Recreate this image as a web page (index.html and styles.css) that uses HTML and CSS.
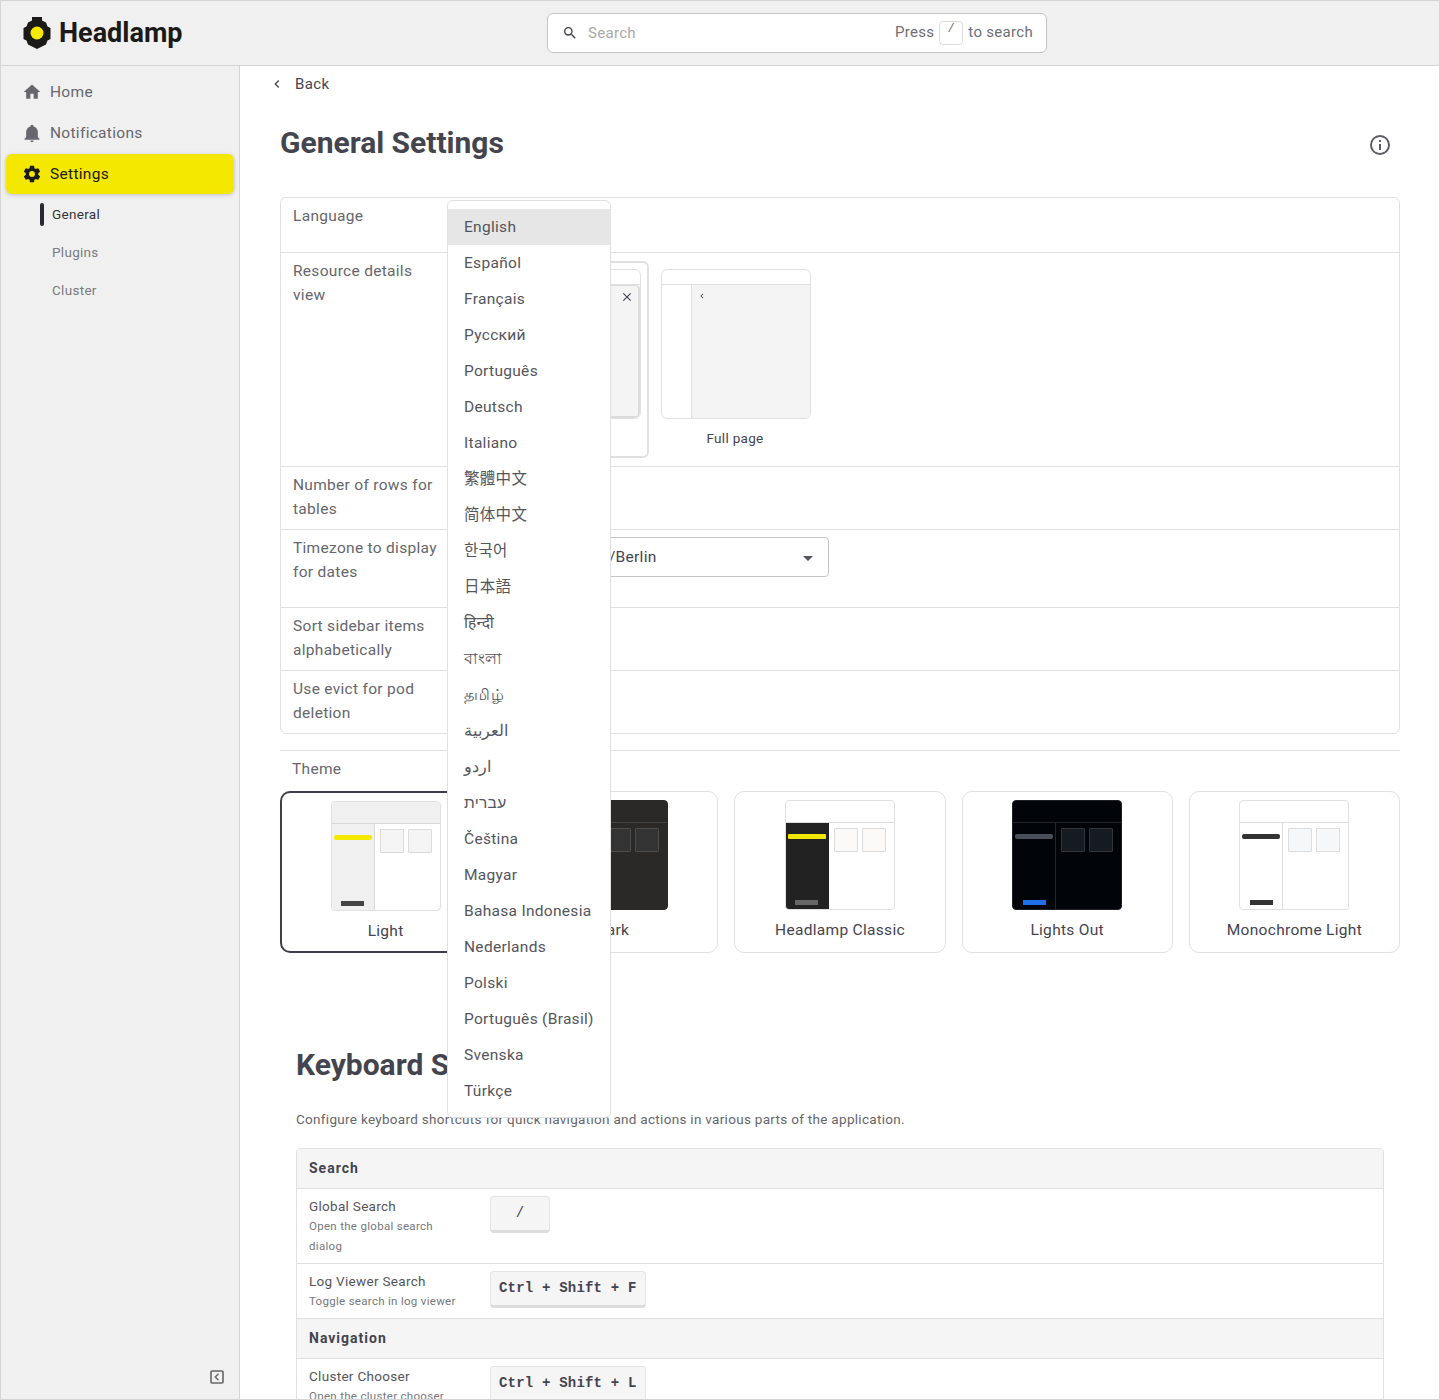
FILE: index.html
```html
<!DOCTYPE html>
<html lang="en">
<head>
  <meta charset="UTF-8" />
  <title>Headlamp - General Settings</title>
  <link rel="stylesheet" href="styles.css">
</head>
<body>
<div class="app">
  <header class="topbar">
    <div class="brand">
      <svg class="brand-logo" viewBox="0 0 28 32" width="28" height="32">
        <path fill="#1c1a17" d="M9 0h10v3.5l4 2 1.500 4 3 1.500v11l-3 1.500-1.500 4-4 2-5 2.500-5-2.500-4-2-1.500-4-3-1.500v-11l3-1.500 1.500-4 4-2z"/>
        <circle cx="14" cy="16" r="6.500" fill="#f5e900"/>
      </svg>
      <span class="brand-name">Headlamp</span>
    </div>
    <div class="search">
      <svg class="search-icon" viewBox="0 0 24 24" width="16" height="16"><path d="M9.500,3A6.500,6.500 0 0,1 16,9.500C16,11.110 15.410,12.590 14.440,13.730L14.710,14H15.500L20.500,19L19,20.500L14,15.500V14.710L13.730,14.440C12.590,15.410 11.110,16 9.500,16A6.500,6.500 0 0,1 3,9.500A6.500,6.500 0 0,1 9.500,3M9.500,5C7,5 5,7 5,9.500C5,12 7,14 9.500,14C12,14 14,12 14,9.500C14,7 12,5 9.500,5Z"/></svg>
      <span class="search-ph">Search</span>
      <span class="search-hint">Press <kbd class="search-key">/</kbd> to search</span>
    </div>
  </header>

  <div class="layout">
    <nav class="sidebar">
      <a class="nav-item">
        <svg viewBox="0 0 24 24" width="20" height="20"><path d="M10,20V14H14V20H19V12H22L12,3L2,12H5V20H10Z"/></svg>
        Home
      </a>
      <a class="nav-item">
        <svg viewBox="0 0 24 24" width="20" height="20"><path d="M21,19V20H3V19L5,17V11C5,7.900 7.030,5.170 10,4.290C10,4.190 10,4.100 10,4A2,2 0 0,1 12,2A2,2 0 0,1 14,4C14,4.100 14,4.190 14,4.290C16.970,5.170 19,7.900 19,11V17L21,19M14,21A2,2 0 0,1 12,23A2,2 0 0,1 10,21"/></svg>
        Notifications
      </a>
      <a class="nav-item nav-active">
        <svg viewBox="0 0 24 24" width="20" height="20"><path d="M12,15.500A3.500,3.500 0 0,1 8.500,12A3.500,3.500 0 0,1 12,8.500A3.500,3.500 0 0,1 15.500,12A3.500,3.500 0 0,1 12,15.500M19.430,12.970C19.470,12.650 19.500,12.330 19.500,12C19.500,11.670 19.470,11.340 19.430,11L21.540,9.370C21.730,9.220 21.780,8.950 21.660,8.730L19.660,5.270C19.540,5.050 19.270,4.960 19.050,5.050L16.560,6.050C16.040,5.660 15.500,5.320 14.870,5.070L14.500,2.420C14.460,2.180 14.250,2 14,2H10C9.750,2 9.540,2.180 9.500,2.420L9.130,5.070C8.500,5.320 7.960,5.660 7.440,6.050L4.950,5.050C4.730,4.960 4.460,5.050 4.340,5.270L2.340,8.730C2.210,8.950 2.270,9.220 2.460,9.370L4.570,11C4.530,11.340 4.500,11.670 4.500,12C4.500,12.330 4.530,12.650 4.570,12.970L2.460,14.630C2.270,14.780 2.210,15.050 2.340,15.270L4.340,18.730C4.460,18.950 4.730,19.030 4.950,18.950L7.440,17.940C7.960,18.340 8.500,18.680 9.130,18.930L9.500,21.580C9.540,21.820 9.750,22 10,22H14C14.250,22 14.460,21.820 14.500,21.580L14.870,18.930C15.500,18.670 16.040,18.340 16.560,17.940L19.050,18.950C19.270,19.030 19.540,18.950 19.660,18.730L21.660,15.270C21.780,15.050 21.730,14.780 21.540,14.630L19.430,12.970Z"/></svg>
        Settings
      </a>
      <div class="subnav">
        <a class="sub-item sub-active">General</a>
        <a class="sub-item">Plugins</a>
        <a class="sub-item">Cluster</a>
      </div>
      <div class="collapse">
        <svg viewBox="0 0 14 14" width="14" height="14"><rect x="1" y="1" width="12" height="12" rx="1" fill="none" stroke="#666" stroke-width="1.600"/><path d="M8.500 3.800 5.300 7l3.200 3.200" fill="none" stroke="#666" stroke-width="1.400"/></svg>
      </div>
    </nav>

    <main class="main">
      <div class="back">
        <svg viewBox="0 0 24 24" width="16" height="16"><path d="M15.410,16.580L10.830,12L15.410,7.410L14,6L8,12L14,18L15.410,16.580Z"/></svg>
        <span>Back</span>
      </div>
      <div class="title-row">
        <h1 class="title">General Settings</h1>
        <svg class="info" viewBox="0 0 24 24" width="24" height="24"><path d="M11,9H13V7H11M12,20C7.590,20 4,16.410 4,12C4,7.590 7.590,4 12,4C16.410,4 20,7.590 20,12C20,16.410 16.410,20 12,20M12,2A10,10 0 0,0 2,12A10,10 0 0,0 12,22A10,10 0 0,0 22,12A10,10 0 0,0 12,2M11,17H13V11H11V17Z"/></svg>
      </div>

      <section class="settings">
        <div class="row row-language">
          <div class="row-name">Language</div>
          <div class="row-value">English</div>
        </div>
        <div class="row">
          <div class="row-name">Resource details view</div>
          <div class="row-value view-options">
            <div class="view-card view-selected">
              <div class="view-preview view-overlay">
                <div class="view-head"></div>
                <div class="view-panel">
                  <svg viewBox="0 0 24 24" width="14" height="14"><path d="M19,6.410L17.590,5L12,10.590L6.410,5L5,6.410L10.590,12L5,17.590L6.410,19L12,13.410L17.590,19L19,17.590L13.410,12L19,6.410Z"/></svg>
                </div>
              </div>
              <div class="view-label">Overlay</div>
            </div>
            <div class="view-card">
              <div class="view-preview">
                <div class="view-head"></div>
                <div class="view-body">
                  <div class="view-side"></div>
                  <div class="view-main">
                    <svg viewBox="0 0 24 24" width="10" height="10"><path d="M15.410,16.580L10.830,12L15.410,7.410L14,6L8,12L14,18L15.410,16.580Z"/></svg>
                  </div>
                </div>
              </div>
              <div class="view-label">Full page</div>
            </div>
          </div>
        </div>
        <div class="row">
          <div class="row-name">Number of rows for tables</div>
          <div class="row-value">15</div>
        </div>
        <div class="row row-timezone">
          <div class="row-name">Timezone to display for dates</div>
          <div class="row-value">
            <div class="tz-select">
              <span>Europe/Berlin</span>
              <i class="caret"></i>
            </div>
          </div>
        </div>
        <div class="row">
          <div class="row-name">Sort sidebar items alphabetically</div>
          <div class="row-value"></div>
        </div>
        <div class="row">
          <div class="row-name">Use evict for pod deletion</div>
          <div class="row-value"></div>
        </div>
      </section>

      <div class="theme-label">Theme</div>
      <div class="themes">
        <div class="theme theme-selected">
          <div class="preview pv-light">
            <div class="pv-head"></div>
            <div class="pv-body">
              <div class="pv-side"><i class="pv-bar"></i><i class="pv-foot"></i></div>
              <div class="pv-main"><i class="pv-box"></i><i class="pv-box"></i></div>
            </div>
          </div>
          <div class="theme-name">Light</div>
        </div>
        <div class="theme">
          <div class="preview pv-dark">
            <div class="pv-head"></div>
            <div class="pv-body">
              <div class="pv-side"><i class="pv-bar"></i><i class="pv-foot"></i></div>
              <div class="pv-main"><i class="pv-box"></i><i class="pv-box"></i></div>
            </div>
          </div>
          <div class="theme-name">Dark</div>
        </div>
        <div class="theme">
          <div class="preview pv-classic">
            <div class="pv-head"></div>
            <div class="pv-body">
              <div class="pv-side"><i class="pv-bar"></i><i class="pv-foot"></i></div>
              <div class="pv-main"><i class="pv-box"></i><i class="pv-box"></i></div>
            </div>
          </div>
          <div class="theme-name">Headlamp Classic</div>
        </div>
        <div class="theme">
          <div class="preview pv-out">
            <div class="pv-head"></div>
            <div class="pv-body">
              <div class="pv-side"><i class="pv-bar"></i><i class="pv-foot"></i></div>
              <div class="pv-main"><i class="pv-box"></i><i class="pv-box"></i></div>
            </div>
          </div>
          <div class="theme-name">Lights Out</div>
        </div>
        <div class="theme">
          <div class="preview pv-mono">
            <div class="pv-head"></div>
            <div class="pv-body">
              <div class="pv-side"><i class="pv-bar"></i><i class="pv-foot"></i></div>
              <div class="pv-main"><i class="pv-box"></i><i class="pv-box"></i></div>
            </div>
          </div>
          <div class="theme-name">Monochrome Light</div>
        </div>
      </div>

      <section class="shortcuts">
        <h2 class="title">Keyboard Shortcuts</h2>
        <p class="shortcuts-desc">Configure keyboard shortcuts for quick navigation and actions in various parts of the application.</p>
        <div class="keys">
          <div class="keys-head">Search</div>
          <div class="keys-row">
            <div class="keys-name">Global Search<small>Open the global search dialog</small></div>
            <span class="key key-short">/</span>
          </div>
          <div class="keys-row">
            <div class="keys-name">Log Viewer Search<small>Toggle search in log viewer</small></div>
            <span class="key">Ctrl + Shift + F</span>
          </div>
          <div class="keys-head">Navigation</div>
          <div class="keys-row">
            <div class="keys-name">Cluster Chooser<small>Open the cluster chooser</small></div>
            <span class="key">Ctrl + Shift + L</span>
          </div>
        </div>
      </section>
    </main>
  </div>

  <ul class="lang-menu">
    <li class="lang-active">English</li>
    <li>Español</li>
    <li>Français</li>
    <li>Русский</li>
    <li>Português</li>
    <li>Deutsch</li>
    <li>Italiano</li>
    <li>繁體中文</li>
    <li>简体中文</li>
    <li>한국어</li>
    <li>日本語</li>
    <li>हिन्दी</li>
    <li>বাংলা</li>
    <li>தமிழ்</li>
    <li>العربية</li>
    <li>اردو</li>
    <li>עברית</li>
    <li>Čeština</li>
    <li>Magyar</li>
    <li>Bahasa Indonesia</li>
    <li>Nederlands</li>
    <li>Polski</li>
    <li>Português (Brasil)</li>
    <li>Svenska</li>
    <li>Türkçe</li>
  </ul>
</div>
</body>
</html>
```

FILE: styles.css
```css
* { box-sizing: border-box; }
html, body {
  margin: 0; padding: 0; height: 100vh;
  overflow: hidden; background: #fff;
  font-family: Roboto, "Noto Sans CJK TC", "Noto Sans", sans-serif;
  font-size: 16px; color: #44444f;
}
.app {
  position: relative; height: 100vh;
  display: flex; flex-direction: column;
  border: 1px solid #d4d4d4; overflow: hidden;
}

/* top bar */
.topbar {
  height: 65px; flex: none;
  display: flex; align-items: center;
  background: #f0f0f0; border-bottom: 1px solid #d4d4d4;
  position: relative;
}
.brand { display: flex; align-items: center; gap: 8px; margin-left: 22px; width: 524px; }
.brand-logo { flex: none; }
.brand-name { font-size: 27px; font-weight: 700; color: #1c1a17; letter-spacing: 0; }
.search {
  width: 500px; height: 40px; margin-top: -1px;
  display: flex; align-items: center;
  background: #fff; border: 1px solid #c4c4c4; border-radius: 6px;
  padding: 0 13px 0 14px; font-size: 15px; letter-spacing: 0.3px;
}
.search-icon { fill: #3f3f46; margin-right: 10px; }
.search-ph { color: #a9a9a9; }
.search-hint { margin-left: auto; color: #6e6e76; }
.search-key {
  display: inline-block; width: 24px; height: 24px; line-height: 24px;
  text-align: center; vertical-align: middle;
  border: 1px solid #dcdcdc; border-radius: 4px;
  font: 12px "Liberation Mono", monospace; margin: 0 1px;
}

/* sidebar */
.layout { flex: 1; display: flex; min-height: 0; }
.sidebar {
  width: 239px; flex: none; position: relative;
  background: #f0f0f0; border-right: 1px solid #d4d4d4;
  padding: 6px 5px 0;
}
.nav-item {
  display: flex; align-items: center; gap: 8px;
  height: 40px; margin-bottom: 1px; padding: 0 0 0 16px;
  border-radius: 6px;
  color: #66666c; letter-spacing: 0.3px; font-size: 15.500px;
}
.nav-item svg { fill: #66666c; flex: none; }
.nav-active {
  background: #f4e800; color: #1c1a17;
  box-shadow: 0 1px 4px rgba(0,0,0,.2);
}
.nav-active svg { fill: #1c1a17; }
.subnav { padding-top: 0; }
.sub-item {
  display: block; height: 38px; line-height: 38px;
  padding-left: 46px; font-size: 13.500px; letter-spacing: 0.3px;
  color: #7b7b80; position: relative;
}
.sub-active { color: #33333a; }
.sub-active::before {
  content: ""; position: absolute; left: 34px; top: 8px;
  width: 4px; height: 23px; border-radius: 2px; background: #2a2a30;
}
.collapse { position: absolute; right: 15px; bottom: 15px; line-height: 0; }

/* main */
.main { flex: 1; min-width: 0; overflow: hidden; padding: 0 39px 0 40px; }
.back {
  height: 36px; margin-left: -11px;
  display: flex; align-items: center; gap: 10px;
  font-size: 15px; letter-spacing: 0.4px;
}
.back svg { fill: #44444f; }
.title-row {
  display: flex; align-items: center; justify-content: space-between;
  height: 40px; margin: 21px 0 34px;
}
.title { margin: 0; font-size: 30px; line-height: 40px; font-weight: 700; color: #44444f; }
.info { fill: #5c5c64; margin: 4px 8px 0 0; }

/* settings table */
.settings { border: 1px solid #e0e0e0; border-radius: 6px; }
.row { display: flex; border-bottom: 1px solid #e0e0e0; }
.row:last-child { border-bottom: 0; }
.row-language { height: 55px; }
.row-timezone { height: 78px; }
.row-name {
  width: 166px; flex: none; padding: 6px 0 8px 12px;
  line-height: 24px; font-size: 15.500px; letter-spacing: 0.3px; color: #66666c;
}
.row-value { flex: 1; padding: 6px 12px 0; }
.view-options { display: flex; gap: 2px; padding: 8px 0 8px 34px; }
.view-card { width: 168px; height: 197px; padding: 6px 8px 0; border: 2px solid transparent; border-radius: 6px; }
.view-selected { border-color: #e0e0e0; }
.view-preview {
  width: 150px; height: 150px; position: relative;
  border: 1px solid #e0e0e0; border-radius: 6px; overflow: hidden;
  display: flex; flex-direction: column;
}
.view-head { height: 15px; flex: none; border-bottom: 1px solid #e0e0e0; }
.view-body { flex: 1; display: flex; }
.view-side { width: 30px; border-right: 1px solid #e0e0e0; }
.view-main { flex: 1; background: #f4f4f4; padding: 6px 5px; line-height: 0; }
.view-main svg { fill: #44444f; }
.view-panel {
  flex: 1; margin-left: 40px; background: #f4f4f4;
  border: 1px solid #dcdcdc; border-right-width: 2px; border-bottom-width: 2px;
  border-radius: 4px;
  display: flex; justify-content: flex-end; padding: 4px; align-items: flex-start;
}
.view-panel svg { fill: #44444f; }
.view-label { text-align: center; font-size: 13.500px; letter-spacing: 0.3px; line-height: 20px; margin-top: 9px; }
.tz-select {
  width: 370px; height: 40px; margin-top: 1px;
  display: flex; align-items: center; justify-content: space-between;
  border: 1px solid #c4c4c4; border-radius: 4px;
  padding: 0 15px 0 99px; letter-spacing: 0.3px; font-size: 15.500px;
}
.caret { width: 0; height: 0; border: 5px solid transparent; border-top-color: #55555c; border-bottom: 0; margin-top: 3px; }

/* themes */
.theme-label {
  margin-top: 16px; height: 41px; border-top: 1px solid #e0e0e0;
  padding-left: 12px; line-height: 37px;
  font-size: 15.500px; letter-spacing: 0.3px; color: #66666c;
}
.themes { display: grid; grid-template-columns: repeat(5, 1fr); gap: 16px; }
.theme {
  height: 162px; padding: 8px 0 0; border: 1px solid #e0e0e0; border-radius: 10px;
  display: flex; flex-direction: column; align-items: center;
}
.theme-selected { border: 2px solid #3f3f4a; }
.theme-name { margin-top: 9px; line-height: 22px; font-size: 15.500px; letter-spacing: 0.3px; }
.preview {
  width: 110px; height: 110px; flex: none; overflow: hidden;
  border-radius: 4px; border: 1px solid #e0e0e0;
  display: flex; flex-direction: column;
}
.pv-head { height: 22px; flex: none; border-bottom: 1px solid #d8d8d8; }
.pv-body { flex: 1; display: flex; min-height: 0; }
.pv-side {
  width: 43px; flex: none; padding: 11px 2px 4px;
  border-right: 1px solid #d8d8d8;
  display: flex; flex-direction: column; align-items: center; justify-content: space-between;
}
.pv-bar { display: block; width: 100%; height: 5px; border-radius: 2px; }
.pv-foot { display: block; width: 23px; height: 5px; }
.pv-main { flex: 1; display: flex; gap: 4px; padding: 5px 0 0 5px; }
.pv-box { display: block; width: 24px; height: 24px; border: 1px solid; border-radius: 1px; }

.pv-light .pv-head, .pv-light .pv-side { background: #f0f0f0; }
.pv-light .pv-bar { background: #f4e800; }
.pv-light .pv-foot { background: #444; }
.pv-light .pv-box { background: #f5f5f5; border-color: #dcdcdc; }

.pv-dark { background: #2a2927; border-color: #2a2927; }
.pv-dark .pv-head, .pv-dark .pv-side { border-color: #44433f; }
.pv-dark .pv-bar { background: #f4e800; }
.pv-dark .pv-foot { background: #888; }
.pv-dark .pv-box { background: #333; border-color: #4c4c4c; }

.pv-classic .pv-head { border-color: #dcdcdc; }
.pv-classic .pv-side { background: #222; border-color: #222; }
.pv-classic .pv-bar { background: #f0e800; border-radius: 1px; }
.pv-classic .pv-foot { background: #666; }
.pv-classic .pv-box { background: #faf9f8; border-color: #dcdcdc; }

.pv-out { background: #010409; border-color: #1c2128; }
.pv-out .pv-head, .pv-out .pv-side { border-color: #21262d; }
.pv-out .pv-bar { background: #4a5059; }
.pv-out .pv-foot { background: #1f6feb; }
.pv-out .pv-box { background: #161b22; border-color: #30363d; }

.pv-mono .pv-head, .pv-mono .pv-side { border-color: #dcdcdc; }
.pv-mono .pv-bar { background: #333; }
.pv-mono .pv-foot { background: #333; }
.pv-mono .pv-box { background: #f6f7f9; border-color: #dcdcdc; }

/* keyboard shortcuts */
.shortcuts { padding: 0 16px; margin-top: 92px; }
.shortcuts-desc { margin: 24px 0 19px; font-size: 13.500px; line-height: 20px; letter-spacing: 0.3px; color: #66666c; }
.keys { border: 1px solid #e0e0e0; border-radius: 4px; }
.keys-head {
  height: 40px; line-height: 38px; padding-left: 12px;
  background: #f5f5f5; border-bottom: 1px solid #e0e0e0;
  font-size: 14px; font-weight: 700; letter-spacing: 1px; color: #44444f;
}
.keys-row { display: flex; align-items: flex-start; border-bottom: 1px solid #e0e0e0; padding: 7px 12px; }
.keys-name { width: 181px; flex: none; font-size: 13.500px; line-height: 20px; letter-spacing: 0.3px; color: #55555c; }
.keys-name small { display: block; max-width: 150px; font-size: 11.500px; letter-spacing: 0.3px; color: #77777d; }
.key {
  display: inline-block; height: 37px; line-height: 33px; padding: 0 8px;
  background: #f5f5f5; border: 1px solid #e4e4e4; border-bottom: 3px solid #dcdcdc; border-radius: 4px;
  font: 700 14px/33px "Liberation Mono", monospace; letter-spacing: 0.2px; color: #44444f;
  white-space: nowrap;
}
.key-short { width: 60px; text-align: center; font-weight: 400; }

/* language dropdown */
.lang-menu {
  position: absolute; left: 446px; top: 199px; width: 164px;
  margin: 0; padding: 8px 0; list-style: none;
  background: #fff; border: 1px solid #e0e0e0; border-radius: 6px;
}
.lang-menu li {
  height: 36px; line-height: 36px; padding-left: 16px;
  font-size: 15.500px; letter-spacing: 0.3px; color: #55555c; white-space: nowrap;
}
.lang-active { background: #e6e6e6; }
```
